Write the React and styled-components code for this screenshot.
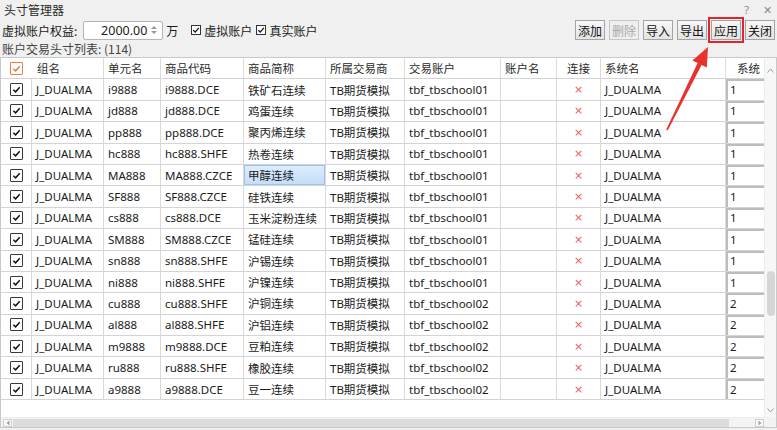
import React from "react";
import styled, { createGlobalStyle } from "styled-components";

const Global = createGlobalStyle`
  html, body { margin: 0; padding: 0; background: #f0f0f0; }
  body { width: 777px; height: 430px; overflow: hidden; font-family: "Noto Sans", "Noto Sans CJK SC", sans-serif; color: #1a1a1a; }
  * { box-sizing: border-box; }
`;

const FONT = `"Noto Sans", "Noto Sans CJK SC", sans-serif`;

const Window = styled.div`
  position: relative;
  width: 777px;
  height: 430px;
  display: flex;
  flex-direction: column;
  background: #f0f0f0;
`;

const TitleBar = styled.div`
  height: 18px;
  display: flex;
  align-items: center;
  justify-content: space-between;
  padding: 0 5px 0 4px;
  font-size: 12px;
  color: #2a2a2a;
  font-family: "Noto Sans CJK SC", sans-serif;
`;

const TitleButtons = styled.div`
  display: flex;
  gap: 14px;
  font-family: ${FONT};
  font-size: 11px;
  color: #8a8a8a;
`;

const Toolbar = styled.div`
  height: 24px;
  display: flex;
  align-items: center;
  padding: 0 2px;
  font-size: 12px;
  font-family: "Noto Sans CJK SC", sans-serif;
`;

const Label = styled.span`
  margin-right: 6px;
  white-space: nowrap;
`;

const SpinBox = styled.div`
  width: 80px;
  height: 19px;
  background: #fff;
  border: 1px solid #b5b5b5;
  border-radius: 2px;
  display: flex;
  align-items: center;
  justify-content: flex-end;
  padding-right: 4px;
  font-family: ${FONT};
  font-size: 12.5px;
  gap: 3px;
`;

const Unit = styled.span`
  margin-left: 3px;
  margin-right: 13px;
`;

const CheckLabel = styled.label`
  display: flex;
  align-items: center;
  gap: 3px;
  margin-right: 4px;
  white-space: nowrap;
`;

const SmallBox = styled.span`
  width: 10px;
  height: 10px;
  border: 1px solid #333;
  background: #fff;
  display: inline-flex;
  align-items: center;
  justify-content: center;
`;

const Spacer = styled.div`
  flex: 1;
`;

const ButtonGroup = styled.div`
  display: flex;
  gap: 4px;
`;

const Button = styled.button`
  width: 30px;
  height: 20px;
  padding: 0;
  font-family: "Noto Sans CJK SC", sans-serif;
  font-size: 12px;
  color: ${(p) => (p.disabled ? "#a8a8a8" : "#111")};
  background: ${(p) => (p.disabled ? "#efefef" : "linear-gradient(#f7f7f7, #e4e4e4)")};
  border: 1px solid ${(p) => (p.disabled ? "#c6c6c6" : "#a3a3a3")};
  outline: ${(p) => (p.$marked ? "2px solid #e3242b" : "none")};
  outline-offset: 1px;
  display: flex;
  align-items: center;
  justify-content: center;
`;

const ListLabel = styled.div`
  height: 14px;
  line-height: 14px;
  padding-left: 2px;
  font-size: 12px;
  color: #444;
  font-family: "Noto Sans CJK SC", sans-serif;
`;

const TableFrame = styled.div`
  margin-top: 1px;
  margin-bottom: 2px;
  flex: 1;
  min-height: 0;
  display: grid;
  grid-template-columns: 1fr 12px;
  grid-template-rows: 1fr 10px;
  border: 1px solid #c9c9c9;
  background: #fff;
`;

const Viewport = styled.div`
  overflow: hidden;
  position: relative;
`;

const COLS = [31, 72, 57, 83, 82, 79, 96, 56, 44, 125, 70];

const Grid = styled.div`
  display: grid;
  grid-template-columns: ${COLS.map((c) => c + "px").join(" ")};
  grid-auto-rows: 21.4px;
  width: max-content;
  font-family: ${FONT};
  font-size: 11.5px;
`;

const HeadCell = styled.div`
  grid-column: span ${(p) => p.$span || 1};
  display: flex;
  align-items: center;
  justify-content: ${(p) => (p.$center ? "center" : "flex-start")};
  padding-left: ${(p) => (p.$center ? 0 : p.$pad || 4)}px;
  border-right: 1px solid #dcdcdc;
  border-bottom: 1px solid #d4d4d4;
  color: #2a2a2a;
  white-space: nowrap;
  overflow: hidden;
  background: #fff;
`;

const HeadCheck = styled.span`
  width: 31px;
  display: flex;
  justify-content: center;
  margin-left: -4px;
  margin-right: 5px;
`;

const Cell = styled.div`
  display: flex;
  align-items: center;
  justify-content: ${(p) => (p.$center ? "center" : "flex-start")};
  padding-left: ${(p) => (p.$center ? 0 : 4)}px;
  border-right: 1px solid #d9d9d9;
  border-bottom: 1px solid #d4d4d4;
  white-space: nowrap;
  overflow: hidden;
  color: #1a1a1a;
  background: ${(p) => (p.$selected ? "linear-gradient(#ddedfd, #c3ddf8)" : "#fff")};
  box-shadow: ${(p) =>
    p.$selected
      ? "inset 0 0 0 1px #9cc3ee"
      : p.$edit
      ? "inset 2px 2px 0 #bdbdbd"
      : "none"};
`;

const Box = styled.span`
  width: 13px;
  height: 13px;
  border: 1px solid ${(p) => (p.$accent ? "#ee7a45" : "#3a3a3a")};
  background: #fff;
  display: inline-flex;
  align-items: center;
  justify-content: center;
  border-radius: 1px;
`;

const Cross = styled.span`
  color: #ef5a5a;
  font-size: 11px;
  font-family: "DejaVu Sans", sans-serif;
`;

const VScroll = styled.div`
  background: #f7f7f7;
  border-left: 1px solid #ececec;
  display: flex;
  flex-direction: column;
  align-items: center;
  padding: 10px 0 4px;
`;

const VTrack = styled.div`
  flex: 1;
  width: 100%;
  display: flex;
  flex-direction: column;
  align-items: center;
  padding-top: 198px;
`;

const VThumb = styled.div`
  width: 8px;
  height: 45px;
  border-radius: 4px;
  background: #d6d6d6;
`;

const HScroll = styled.div`
  background: #f3f3f3;
  border-top: 1px solid #ececec;
  display: flex;
  align-items: center;
  padding: 0 0 0 2px;
`;

const HArrowBox = styled.div`
  width: 9px;
  height: 8px;
  border: 1px solid #cfcfcf;
  background: #fafafa;
  display: flex;
  align-items: center;
  justify-content: center;
`;

const HThumb = styled.div`
  width: 716px;
  height: 8px;
  background: #dcdcdc;
  margin-left: 1px;
`;

const Corner = styled.div`
  background: #f3f3f3;
`;

const ArrowLayer = styled.svg`
  position: absolute;
  left: 0;
  top: 0;
  pointer-events: none;
`;

const Check = ({ color = "#111", size = 9 }) => (
  <svg width={size} height={size} viewBox="0 0 10 10">
    <path d="M1.5 5.2 L4 7.6 L8.6 2.4" fill="none" stroke={color} strokeWidth="1.6" />
  </svg>
);

const rows = [
  ["i9888", "i9888.DCE", "铁矿石连续", "tbf_tbschool01", "1"],
  ["jd888", "jd888.DCE", "鸡蛋连续", "tbf_tbschool01", "1"],
  ["pp888", "pp888.DCE", "聚丙烯连续", "tbf_tbschool01", "1"],
  ["hc888", "hc888.SHFE", "热卷连续", "tbf_tbschool01", "1"],
  ["MA888", "MA888.CZCE", "甲醇连续", "tbf_tbschool01", "1"],
  ["SF888", "SF888.CZCE", "硅铁连续", "tbf_tbschool01", "1"],
  ["cs888", "cs888.DCE", "玉米淀粉连续", "tbf_tbschool01", "1"],
  ["SM888", "SM888.CZCE", "锰硅连续", "tbf_tbschool01", "1"],
  ["sn888", "sn888.SHFE", "沪锡连续", "tbf_tbschool01", "1"],
  ["ni888", "ni888.SHFE", "沪镍连续", "tbf_tbschool01", "1"],
  ["cu888", "cu888.SHFE", "沪铜连续", "tbf_tbschool02", "2"],
  ["al888", "al888.SHFE", "沪铝连续", "tbf_tbschool02", "2"],
  ["m9888", "m9888.DCE", "豆粕连续", "tbf_tbschool02", "2"],
  ["ru888", "ru888.SHFE", "橡胶连续", "tbf_tbschool02", "2"],
  ["a9888", "a9888.DCE", "豆一连续", "tbf_tbschool02", "2"],
];

export default function App() {
  const tip = [708, 47];
  const tail = [667, 130];
  const dx = tip[0] - tail[0];
  const dy = tip[1] - tail[1];
  const len = Math.hypot(dx, dy);
  const ux = dx / len, uy = dy / len;
  const px = -uy, py = ux;
  const headLen = 19, headHalf = 8;
  const bx = tip[0] - ux * headLen, by = tip[1] - uy * headLen;
  const sTop = 2.2, sBot = 0.8;
  const pts = [
    [tail[0] + px * sBot, tail[1] + py * sBot],
    [bx + px * sTop, by + py * sTop],
    [bx + px * headHalf, by + py * headHalf],
    tip,
    [bx - px * headHalf, by - py * headHalf],
    [bx - px * sTop, by - py * sTop],
    [tail[0] - px * sBot, tail[1] - py * sBot],
  ]
    .map((p) => p.map((v) => v.toFixed(1)).join(","))
    .join(" ");

  return (
    <Window>
      <Global />
      <TitleBar>
        <span>头寸管理器</span>
        <TitleButtons>
          <span>?</span>
          <span>✕</span>
        </TitleButtons>
      </TitleBar>
      <Toolbar>
        <Label>虚拟账户权益:</Label>
        <SpinBox>
          <span>2000.00</span>
          <svg width="8" height="12" viewBox="0 0 8 12">
            <path d="M1 5 L4 2 L7 5 Z" fill="#9a9a9a" />
            <path d="M1 7 L4 10 L7 7 Z" fill="#9a9a9a" />
          </svg>
        </SpinBox>
        <Unit>万</Unit>
        <CheckLabel>
          <SmallBox><Check size={8} /></SmallBox>虚拟账户
        </CheckLabel>
        <CheckLabel>
          <SmallBox><Check size={8} /></SmallBox>真实账户
        </CheckLabel>
        <Spacer />
        <ButtonGroup>
          <Button>添加</Button>
          <Button disabled>删除</Button>
          <Button>导入</Button>
          <Button>导出</Button>
          <Button $marked>应用</Button>
          <Button>关闭</Button>
        </ButtonGroup>
      </Toolbar>
      <ListLabel>账户交易头寸列表: (114)</ListLabel>
      <TableFrame>
        <Viewport>
          <Grid>
            <HeadCell $span={2}>
              <HeadCheck>
                <Box $accent><Check color="#ee7a45" /></Box>
              </HeadCheck>
              组名
            </HeadCell>
            <HeadCell>单元名</HeadCell>
            <HeadCell>商品代码</HeadCell>
            <HeadCell>商品简称</HeadCell>
            <HeadCell>所属交易商</HeadCell>
            <HeadCell>交易账户</HeadCell>
            <HeadCell>账户名</HeadCell>
            <HeadCell $center>连接</HeadCell>
            <HeadCell>系统名</HeadCell>
            <HeadCell $pad={11}>系统</HeadCell>
            {rows.map((r, i) => (
              <React.Fragment key={i}>
                <Cell $center>
                  <Box><Check /></Box>
                </Cell>
                <Cell>J_DUALMA</Cell>
                <Cell>{r[0]}</Cell>
                <Cell>{r[1]}</Cell>
                <Cell $selected={i === 4}>{r[2]}</Cell>
                <Cell>TB期货模拟</Cell>
                <Cell>{r[3]}</Cell>
                <Cell></Cell>
                <Cell $center>
                  <Cross>×</Cross>
                </Cell>
                <Cell>J_DUALMA</Cell>
                <Cell $edit>{r[4]}</Cell>
              </React.Fragment>
            ))}
          </Grid>
        </Viewport>
        <VScroll>
          <svg width="7" height="5" viewBox="0 0 7 5">
            <path d="M0.5 4.5 L3.5 1 L6.5 4.5" fill="none" stroke="#9a9a9a" strokeWidth="1" />
          </svg>
          <VTrack>
            <VThumb />
          </VTrack>
          <svg width="7" height="5" viewBox="0 0 7 5">
            <path d="M0.5 0.5 L3.5 4 L6.5 0.5" fill="none" stroke="#9a9a9a" strokeWidth="1" />
          </svg>
        </VScroll>
        <HScroll>
          <HArrowBox>
            <svg width="4" height="6" viewBox="0 0 4 6"><path d="M3.5 0.5 L0.5 3 L3.5 5.5 Z" fill="#a0a0a0" /></svg>
          </HArrowBox>
          <HThumb />
          <Spacer />
          <HArrowBox>
            <svg width="4" height="6" viewBox="0 0 4 6"><path d="M0.5 0.5 L3.5 3 L0.5 5.5 Z" fill="#a0a0a0" /></svg>
          </HArrowBox>
        </HScroll>
        <Corner />
      </TableFrame>
      <ArrowLayer width="777" height="430" viewBox="0 0 777 430">
        <polygon points={pts} fill="#e8322b" />
      </ArrowLayer>
    </Window>
  );
}
